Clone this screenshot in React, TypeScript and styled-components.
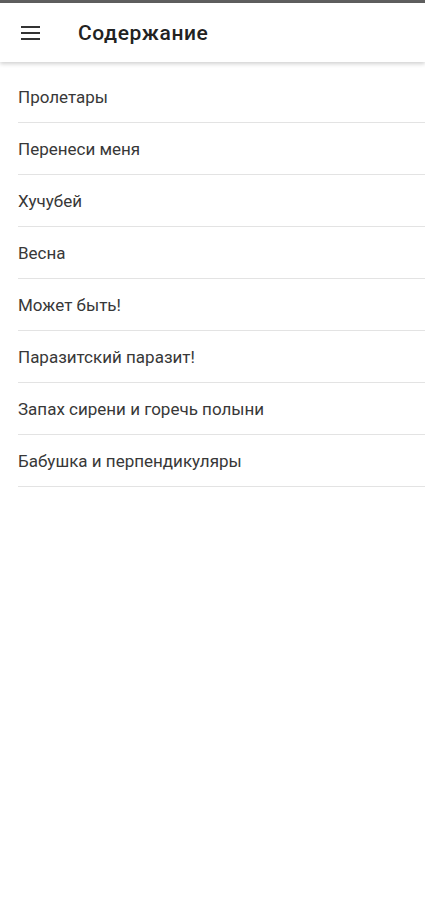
import React from "react";
import styled, { createGlobalStyle } from "styled-components";

const Global = createGlobalStyle`
  html, body { margin: 0; padding: 0; background: #ffffff; }
  body { font-family: Roboto, "Noto Sans", Arial, sans-serif; }
`;

const Page = styled.div`
  width: 425px;
  min-height: 900px;
  background: #ffffff;
  display: flex;
  flex-direction: column;
`;

const StatusStrip = styled.div`
  height: 3px;
  background: #5f5f5f;
`;

const Toolbar = styled.header`
  height: 59px;
  display: flex;
  align-items: center;
  background: #ffffff;
  box-shadow: 0 2px 4px rgba(0, 0, 0, 0.18);
  position: relative;
  z-index: 1;
`;

const MenuButton = styled.div`
  width: 60px;
  height: 59px;
  display: flex;
  align-items: center;
  justify-content: center;
  padding-left: 2px;
  box-sizing: border-box;
`;

const Title = styled.h1`
  margin: 0 0 0 18px;
  font-size: 21px;
  font-weight: 500;
  color: #222222;
  letter-spacing: 0.6px;
`;

const List = styled.ul`
  list-style: none;
  margin: 9px 0 0 0;
  padding: 0 0 0 18px;
`;

const Item = styled.li`
  box-sizing: border-box;
  height: 52px;
  display: flex;
  align-items: center;
  font-size: 17px;
  color: #383838;
  border-bottom: 1px solid #e3e3e3;
  padding-top: 1px;
`;

const items = [
  "Пролетары",
  "Перенеси меня",
  "Хучубей",
  "Весна",
  "Может быть!",
  "Паразитский паразит!",
  "Запах сирени и горечь полыни",
  "Бабушка и перпендикуляры",
];

export default function App() {
  return (
    <Page>
      <Global />
      <StatusStrip />
      <Toolbar>
        <MenuButton>
          <svg width="20" height="14" viewBox="0 0 20 14">
            <rect x="0" y="0" width="19" height="2" fill="#333" />
            <rect x="0" y="6" width="19" height="2" fill="#333" />
            <rect x="0" y="12" width="19" height="2" fill="#333" />
          </svg>
        </MenuButton>
        <Title>Содержание</Title>
      </Toolbar>
      <List>
        {items.map((t) => (
          <Item key={t}>{t}</Item>
        ))}
      </List>
    </Page>
  );
}
